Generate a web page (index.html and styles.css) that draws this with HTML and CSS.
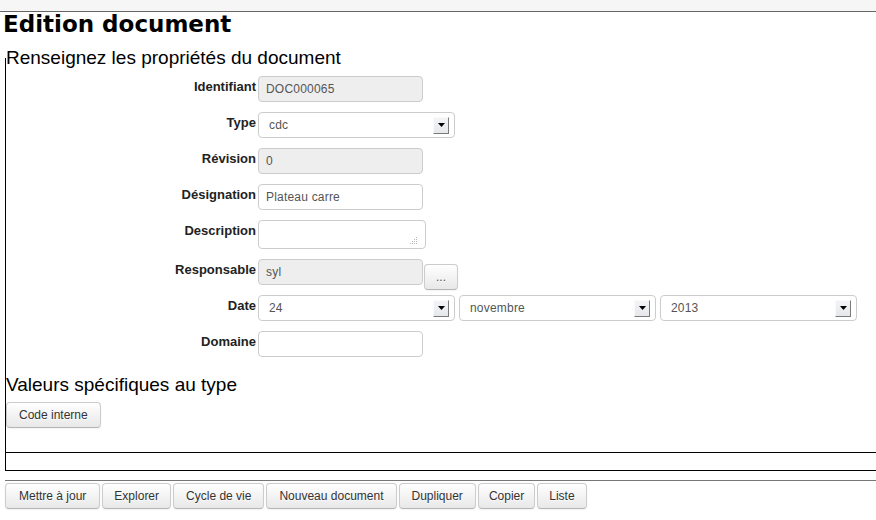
FILE: index.html
```html
<!DOCTYPE html>
<html lang="fr">
<head>
<meta charset="utf-8">
<title>Edition document</title>
<link rel="stylesheet" href="styles.css">
</head>
<body>
<div class="topbar"></div>
<div class="page">
  <h1 class="title">Edition document</h1>
  <fieldset class="panel">
    <legend class="legend">Renseignez les propriétés du document</legend>
    <div class="form">
      <div class="row">
        <label class="label">Identifiant</label>
        <div class="input readonly">DOC000065</div>
      </div>
      <div class="row">
        <label class="label">Type</label>
        <div class="select"><span>cdc</span><span class="arrow"><svg width="7" height="4" viewBox="0 0 7 4"><polygon points="0,0 7,0 3.5,4" fill="#000"/></svg></span></div>
      </div>
      <div class="row">
        <label class="label">Révision</label>
        <div class="input readonly">0</div>
      </div>
      <div class="row">
        <label class="label">Désignation</label>
        <div class="input">Plateau carre</div>
      </div>
      <div class="row">
        <label class="label">Description</label>
        <div class="textarea"><svg class="grip" width="10" height="10" viewBox="0 0 10 10"><g fill="#b8b8b8"><rect x="8" y="2" width="1" height="1"/><rect x="8" y="4" width="1" height="1"/><rect x="6" y="4" width="1" height="1"/><rect x="8" y="6" width="1" height="1"/><rect x="6" y="6" width="1" height="1"/><rect x="8" y="8" width="1" height="1"/><rect x="6" y="8" width="1" height="1"/><rect x="4" y="8" width="1" height="1"/><rect x="2" y="8" width="1" height="1"/><rect x="4" y="6" width="1" height="1"/></g></svg></div>
      </div>
      <div class="row">
        <label class="label">Responsable</label>
        <div class="input readonly">syl</div>
        <button class="btn btn-dots">...</button>
      </div>
      <div class="row">
        <label class="label">Date</label>
        <div class="dates">
          <div class="select"><span>24</span><span class="arrow"><svg width="7" height="4" viewBox="0 0 7 4"><polygon points="0,0 7,0 3.5,4" fill="#000"/></svg></span></div>
          <div class="select"><span>novembre</span><span class="arrow"><svg width="7" height="4" viewBox="0 0 7 4"><polygon points="0,0 7,0 3.5,4" fill="#000"/></svg></span></div>
          <div class="select"><span>2013</span><span class="arrow"><svg width="7" height="4" viewBox="0 0 7 4"><polygon points="0,0 7,0 3.5,4" fill="#000"/></svg></span></div>
        </div>
      </div>
      <div class="row">
        <label class="label">Domaine</label>
        <div class="input"></div>
      </div>
    </div>
    <h2 class="subtitle">Valeurs spécifiques au type</h2>
    <button class="btn">Code interne</button>
  </fieldset>
  <div class="spacer"></div>
  <div class="sep"></div>
  <div class="actions">
    <button class="btn btn-wide">Mettre à jour</button>
    <button class="btn btn-narrow2">Explorer</button>
    <button class="btn">Cycle de vie</button>
    <button class="btn">Nouveau document</button>
    <button class="btn">Dupliquer</button>
    <button class="btn btn-narrow">Copier</button>
    <button class="btn btn-narrow2">Liste</button>
  </div>
</div>
</body>
</html>
```
FILE: styles.css
```css
html, body {
  margin: 0;
  padding: 0;
  background: #fff;
  overflow: hidden;
}
body {
  font-family: "Liberation Sans", Arial, sans-serif;
  color: #000;
  width: 876px;
  height: 520px;
}
.topbar {
  height: 11px;
  background: #f6f6f6;
  border-bottom: 1px solid #666;
}
.page {
  padding-left: 5px;
}
.title {
  margin: 0 0 10px -2px;
  font-family: "DejaVu Sans", sans-serif;
  font-weight: bold;
  font-size: 23px;
  line-height: 25px;
  color: #000;
}
.panel {
  margin: 0 -20px 0 0;
  padding: 0 0 24px 0;
  border: 0;
  border-left: 1px solid #000;
  border-bottom: 1px solid #000;
  min-width: 0;
}
.legend {
  padding: 0;
  font-size: 19px;
  line-height: 22px;
  color: #000;
}
.form {
  padding-top: 7px;
}
.row {
  display: flex;
  align-items: flex-start;
  margin-bottom: 10px;
}
.label {
  width: 250px;
  flex: none;
  margin-right: 2px;
  text-align: right;
  font-weight: bold;
  font-size: 13px;
  line-height: 18px;
  padding-top: 2px;
  color: #222;
}
.input, .select, .textarea {
  box-sizing: border-box;
  border: 1px solid #ccc;
  border-radius: 4px;
  background: #fff;
  font-size: 12px;
  color: #555;
  height: 26px;
  line-height: 24px;
}
.input {
  width: 165px;
  padding-left: 7px;
  letter-spacing: 0.2px;
}
.readonly {
  background: #eee;
}
.select {
  width: 197px;
  display: flex;
  align-items: center;
  justify-content: space-between;
  padding: 0 5px 0 10px;
  letter-spacing: 0.2px;
}
.arrow {
  box-sizing: border-box;
  width: 16px;
  height: 17px;
  display: flex;
  align-items: center;
  justify-content: center;
  background: linear-gradient(#f3f4f6, #e6e8ec);
  border-top: 1px solid #fafafa;
  border-left: 1px solid #fafafa;
  border-right: 1px solid #7a7a7a;
  border-bottom: 1px solid #7a7a7a;
}
.arrow svg {
  display: block;
}
.textarea {
  width: 168px;
  height: 29px;
  position: relative;
}
.grip {
  position: absolute;
  right: 7px;
  bottom: 3px;
}
.dates {
  display: flex;
  gap: 4px;
}
.btn {
  box-sizing: border-box;
  height: 26px;
  padding: 0 12px;
  font-family: "Liberation Sans", Arial, sans-serif;
  font-size: 12px;
  color: #333;
  background: linear-gradient(#ffffff, #e8e8e8);
  border: 1px solid #ccc;
  border-bottom-color: #b5b5b5;
  border-radius: 4px;
  box-shadow: inset 0 1px 0 rgba(255,255,255,0.2), 0 1px 2px rgba(0,0,0,0.05);
  text-shadow: 0 1px 1px rgba(255,255,255,0.75);
  cursor: pointer;
}
.btn-wide {
  padding: 0 13px;
}
.btn-narrow {
  padding: 0 10px;
}
.btn-narrow2 {
  padding: 0 11px;
}
.btn-dots {
  width: 34px;
  padding: 0;
  margin: 5px 0 -5px 1px;
  color: #555;
}
.subtitle {
  margin: 17px 0 6px 0;
  font-size: 19px;
  line-height: 22px;
  font-weight: normal;
  color: #000;
}
.spacer {
  height: 17px;
  margin-right: -20px;
  border-left: 1px solid #000;
  border-bottom: 1px solid #000;
}
.sep {
  margin-top: 9px;
  border-top: 1px solid #777;
}
.actions {
  display: flex;
  gap: 2px;
  margin-top: 2px;
}
```
